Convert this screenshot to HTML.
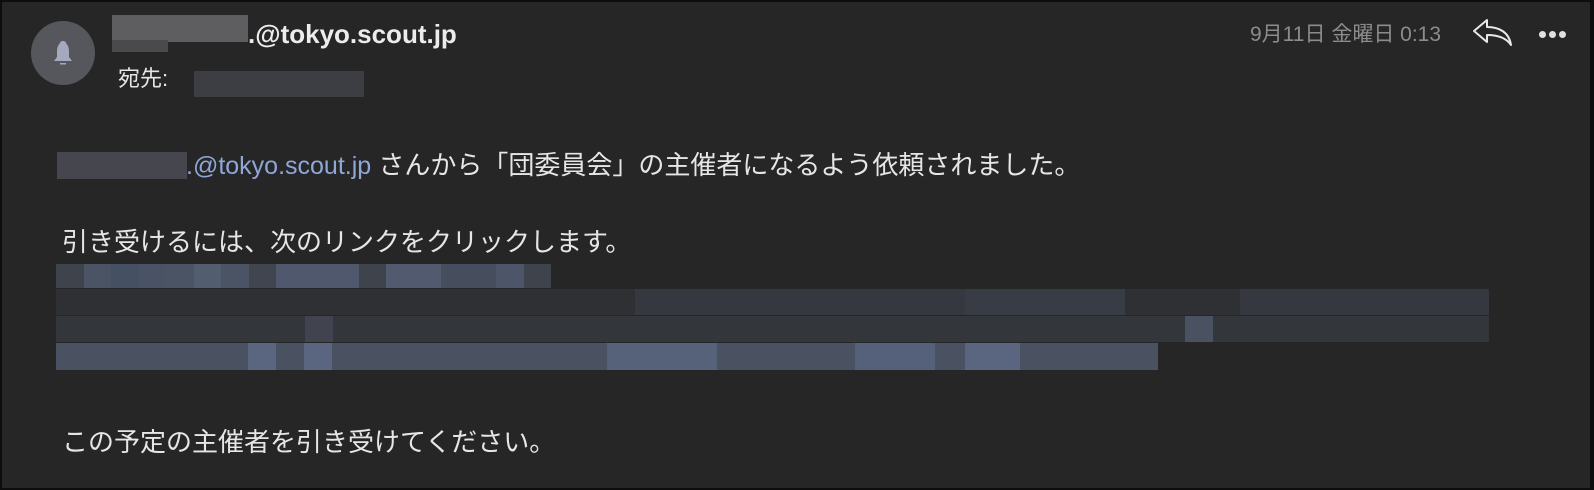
<!DOCTYPE html>
<html><head><meta charset="utf-8"><style>
body{margin:0;width:1594px;height:490px;background:#0d0d0d;overflow:hidden;font-family:"Liberation Sans","Noto Sans CJK JP",sans-serif}
.w{position:absolute;left:2px;top:2px;width:1588px;height:486px;background:#262626}
.a{position:absolute}
.t{color:#e6e6e6;font-size:26px;white-space:nowrap}
.r{position:absolute;display:flex;height:27px}
.r span{width:27.5px;height:100%;flex:none}
</style></head><body><div class="w"></div>
<div class="a" style="left:31px;top:21px;width:64px;height:64px;border-radius:50%;background:#56575c"></div>
<svg class="a" style="left:47px;top:37px" width="32" height="32" viewBox="0 0 32 32"><path d="M16 4c-2 0-3 1-3.5 3C11 8 10 11 10 15v5l-3 4h18l-3-4v-5c0-4-1-7-2.5-8C19 5 18 4 16 4z" fill="#a3aac0"/><rect x="13" y="26" width="6" height="1.5" fill="#a3aac0"/></svg>
<div class="a" style="left:112px;top:15px;width:136px;height:27px;background:#5e5e60"></div>
<div class="a" style="left:112px;top:40px;width:56px;height:12px;background:#4a4a4c"></div>
<div class="a t" style="left:248px;top:19px;font-size:26px;font-weight:bold;color:#ececec">.@tokyo.scout.jp</div>
<div class="a t" style="left:118px;top:61px;font-size:22px">宛先: </div>
<div class="a" style="left:194px;top:71px;width:170px;height:26px;background:#3d3e43"></div>
<div class="a" style="left:1250px;top:18px;color:#8c8c8c;font-size:21px;white-space:nowrap">9月11日 金曜日 0:13</div>
<svg class="a" style="left:1471px;top:17px" width="44" height="32" viewBox="0 0 44 32"><path d="M3 14L16 3v7c12 0 22 5 24 18c-4-6-11-10-24-10v7z" fill="none" stroke="#e8e8e8" stroke-width="2" stroke-linejoin="round"/></svg>
<div class="a" style="left:1539px;top:31px;font-size:0">
<span style="display:inline-block;width:7px;height:7px;border-radius:50%;background:#e0e0e0;margin-right:3px"></span><span style="display:inline-block;width:7px;height:7px;border-radius:50%;background:#e0e0e0;margin-right:3px"></span><span style="display:inline-block;width:7px;height:7px;border-radius:50%;background:#e0e0e0"></span></div>
<div class="a" style="left:57px;top:152px;width:130px;height:27px;background:#46474e"></div>
<div class="a t" style="left:186px;top:145px"><span style="color:#8fa6d8;font-size:25px">.@tokyo.scout.jp</span> さんから「団委員会」の主催者になるよう依頼されました。</div>
<div class="a t" style="left:62px;top:222px">引き受けるには、次のリンクをクリックします。</div>
<div class="r" style="left:56px;top:264px;width:495px;height:24px;background:#4b5465">
<span style="background:#3f444c"></span><span></span><span style="background:#465063"></span><span style="background:#4a5366"></span><span></span><span style="background:#525d70"></span><span></span><span style="background:#404550"></span><span style="background:#4f586c"></span><span style="background:#4f586c"></span><span style="background:#4f586c"></span><span style="background:#3f444c"></span><span style="background:#515a6e"></span><span style="background:#515a6e"></span><span style="background:#464e5d"></span><span style="background:#464e5d"></span><span style="background:#4d5668"></span><span style="background:#3f444c"></span></div>
<div class="a" style="left:56px;top:289px;width:1433px;height:26px;background:#2f3034"></div>
<div class="a" style="left:635px;top:289px;width:330px;height:26px;background:#35383e"></div>
<div class="a" style="left:965px;top:289px;width:160px;height:26px;background:#383c44"></div>
<div class="a" style="left:1240px;top:289px;width:249px;height:26px;background:#35383e"></div>
<div class="a" style="left:56px;top:316px;width:1433px;height:26px;background:#33363b"></div>
<div class="a" style="left:1185px;top:316px;width:28px;height:26px;background:#4a5262"></div>
<div class="a" style="left:305px;top:316px;width:28px;height:26px;background:#41444e"></div>
<div class="a" style="left:56px;top:343px;width:1102px;height:27px;background:#4a5262"></div>
<div class="a" style="left:607px;top:343px;width:110px;height:27px;background:#56617a"></div>
<div class="a" style="left:965px;top:343px;width:55px;height:27px;background:#5a6680"></div>
<div class="a" style="left:248px;top:343px;width:28px;height:27px;background:#5a6680"></div>
<div class="a" style="left:304px;top:343px;width:28px;height:27px;background:#5a6680"></div>
<div class="a" style="left:855px;top:343px;width:80px;height:27px;background:#55607a"></div>
<div class="a t" style="left:62px;top:422px">この予定の主催者を引き受けてください。</div>
</body></html>
